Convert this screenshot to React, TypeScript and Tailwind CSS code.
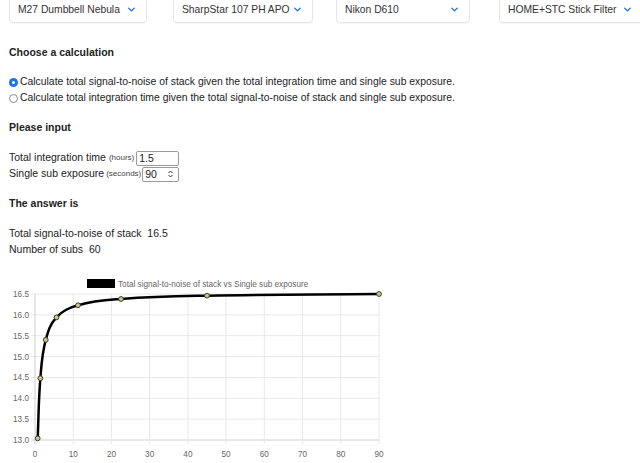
import React from 'react';
import { ChevronDown } from 'lucide-react';

const font = { fontFamily: '"Liberation Sans", Arial, sans-serif' };

const selects = [
  { label: 'M27 Dumbbell Nebula', cls: 'ml-[9px] w-[138px]' },
  { label: 'SharpStar 107 PH APO', cls: 'ml-[26px] w-[140px]' },
  { label: 'Nikon D610', cls: 'ml-[23px] w-[134px]' },
  { label: 'HOME+STC Stick Filter', cls: 'ml-[29px] w-[144px]' },
];

// sub exposure (s) vs total SNR of stack
const data = [
  [0.703, 13.04],
  [1.406, 14.48],
  [2.8125, 15.4],
  [5.625, 15.94],
  [11.25, 16.23],
  [22.5, 16.38],
  [45, 16.46],
  [90, 16.5],
];

const X0 = 35;
const X1 = 379;
const Y0 = 295;
const Y1 = 441;
const px = (v: number) => X0 + (v / 90) * (X1 - X0);
const py = (v: number) => Y0 + ((16.5 - v) / 3.5) * (Y1 - Y0);

function splinePath(pts: number[][]) {
  const t = 0.4;
  const cps = pts.map((cur, i) => {
    const prev = pts[i - 1] || cur;
    const next = pts[i + 1] || cur;
    const d01 = Math.hypot(cur[0] - prev[0], cur[1] - prev[1]);
    const d12 = Math.hypot(next[0] - cur[0], next[1] - cur[1]);
    const s01 = d01 / (d01 + d12 || 1);
    const s12 = d12 / (d01 + d12 || 1);
    const fa = t * s01;
    const fb = t * s12;
    const clampY = (y: number) => Math.min(Math.max(y, Y0), Y1);
    return {
      p: [cur[0] - fa * (next[0] - prev[0]), clampY(cur[1] - fa * (next[1] - prev[1]))],
      n: [cur[0] + fb * (next[0] - prev[0]), clampY(cur[1] + fb * (next[1] - prev[1]))],
    };
  });
  let d = `M${pts[0][0]},${pts[0][1]}`;
  for (let i = 1; i < pts.length; i++) {
    const a = cps[i - 1].n;
    const b = cps[i].p;
    d += ` C${a[0]},${a[1]} ${b[0]},${b[1]} ${pts[i][0]},${pts[i][1]}`;
  }
  return d;
}

const Chart: React.FC = () => {
  const pts = data.map(([x, y]) => [px(x), py(y)]);
  const yTicks = [16.5, 16.0, 15.5, 15.0, 14.5, 14.0, 13.5, 13.0];
  const xTicks = [0, 10, 20, 30, 40, 50, 60, 70, 80, 90];
  return (
    <svg width="400" height="193" viewBox="0 270 400 193" className="block">
      <rect x="87" y="280" width="28" height="9" fill="#000" />
      <text x="118" y="288" fontSize="8.2" fill="#666" style={font}>
        Total signal-to-noise of stack vs Single sub exposure
      </text>
      {yTicks.map((v) => (
        <g key={v}>
          <line x1={X0 - 4} x2={X1} y1={py(v)} y2={py(v)} stroke={v === 13 ? '#d0d0d0' : '#e8e8e8'} strokeWidth="1" />
          <text x="29" y={py(v) + 3} fontSize="8.2" fill="#666" textAnchor="end" style={font}>
            {v.toFixed(1)}
          </text>
        </g>
      ))}
      {xTicks.map((v) => (
        <g key={v}>
          <line x1={px(v)} x2={px(v)} y1={Y0} y2={Y1 + 4} stroke={v === 0 ? '#d0d0d0' : '#e8e8e8'} strokeWidth="1" />
          <text x={px(v)} y="458" fontSize="8.2" fill="#666" textAnchor="middle" style={font}>
            {v}
          </text>
        </g>
      ))}
      <path d={splinePath(pts)} fill="none" stroke="#000" strokeWidth="2.5" />
      {pts.map(([x, y], i) => (
        <circle key={i} cx={x} cy={y} r="2.4" fill="#c9c98c" stroke="#3b3b2a" strokeWidth="1" />
      ))}
    </svg>
  );
};

const Radio: React.FC<{ checked?: boolean }> = ({ checked }) => (
  <span
    className={`inline-flex items-center justify-center w-[9px] h-[9px] rounded-full mr-[2px] shrink-0 ${
      checked ? 'bg-[#1b74e8]' : 'border border-[#8a8a8a] bg-white'
    }`}
  >
    {checked && <span className="w-[3px] h-[3px] rounded-full bg-white" />}
  </span>
);

export default function App() {
  return (
    <div className="w-full h-[463px] overflow-hidden bg-white text-[#222] text-[10.5px]" style={font}>
      {/* Equipment selects */}
      <div className="flex -mt-[7px]">
        {selects.map((s) => (
          <div
            key={s.label}
            className={`${s.cls} shrink-0 h-[30px] flex items-end justify-between pb-[5px] pl-2 pr-[9px] border border-[#e6e6e6] rounded-[4px] shadow-[0_1px_1px_rgba(0,0,0,0.04)]`}
          >
            <span className="whitespace-nowrap text-[10.3px] leading-[14px] text-[#333]">{s.label}</span>
            <ChevronDown size={11} strokeWidth={3} className="shrink-0 text-[#1b6fd8] mb-[2px]" />
          </div>
        ))}
      </div>

      <div className="pl-[9px] whitespace-nowrap">
        <h3 className="mt-[22px] text-[10.5px] leading-[14px] font-bold text-[#222]">Choose a calculation</h3>
        <div className="mt-[15px] leading-[16px] text-[10.4px]">
          <div className="flex items-center">
            <Radio checked />
            <span>Calculate total signal-to-noise of stack given the total integration time and single sub exposure.</span>
          </div>
          <div className="flex items-center">
            <Radio />
            <span>Calculate total integration time given the total signal-to-noise of stack and single sub exposure.</span>
          </div>
        </div>

        <h3 className="mt-[14px] text-[10.5px] leading-[14px] font-bold text-[#222]">Please input</h3>
        <div className="mt-[16px]">
          <div className="flex items-center h-[16px]">
            <span>Total integration time</span>
            <span className="text-[8px] ml-[3px] mr-[2px] text-[#444]">(hours)</span>
            <span className="w-[43px] h-[15px] border border-[#9a9a9a] rounded-[2px] pl-[2px] leading-[13px]">1.5</span>
          </div>
          <div className="flex items-center h-[16px]">
            <span>Single sub exposure</span>
            <span className="text-[8px] ml-[2px] mr-[1px] text-[#444]">(seconds)</span>
            <span className="w-[37px] h-[15px] border border-[#9a9a9a] rounded-[2px] pl-[2px] pr-[5px] leading-[13px] flex items-center justify-between">
              <span>90</span>
              <svg width="5" height="8" viewBox="0 0 5 8">
                <path d="M0.5 3 L2.5 1 L4.5 3 M0.5 5 L2.5 7 L4.5 5" fill="none" stroke="#333" strokeWidth="1" />
              </svg>
            </span>
          </div>
        </div>

        <h3 className="mt-[14px] text-[10.5px] leading-[14px] font-bold text-[#222]">The answer is</h3>
        <div className="mt-[15px] leading-[16px]">
          <div>Total signal-to-noise of stack&nbsp; 16.5</div>
          <div>Number of subs&nbsp; 60</div>
        </div>
      </div>

      <div className="mt-[12px]">
        <Chart />
      </div>
    </div>
  );
}
